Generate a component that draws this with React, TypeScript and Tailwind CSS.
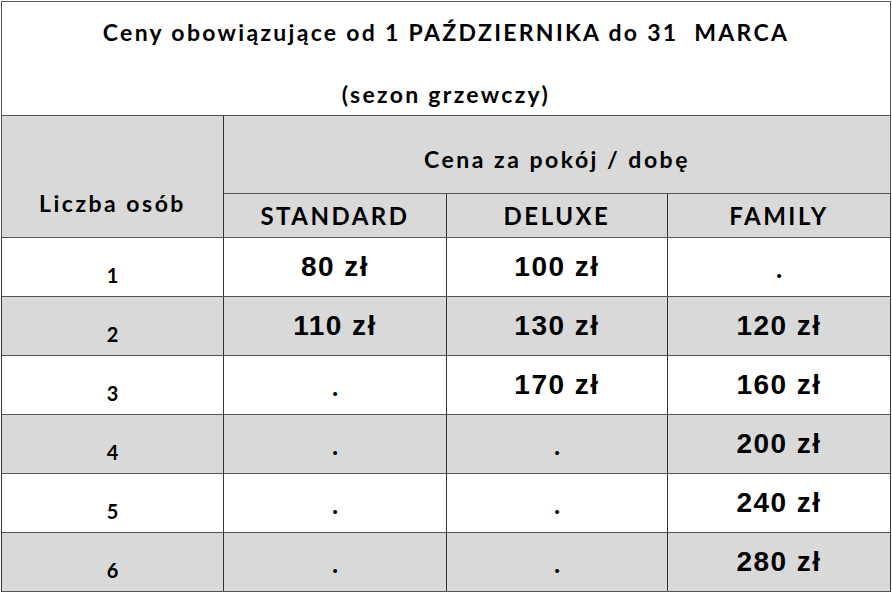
import React from "react";

type Row = {
    persons: string;
    standard: string;
    deluxe: string;
    family: string;
};

const rows: Row[] = [
    { persons: "1", standard: "80 zł", deluxe: "100 zł", family: "." },
    { persons: "2", standard: "110 zł", deluxe: "130 zł", family: "120 zł" },
    { persons: "3", standard: ".", deluxe: "170 zł", family: "160 zł" },
    { persons: "4", standard: ".", deluxe: ".", family: "200 zł" },
    { persons: "5", standard: ".", deluxe: ".", family: "240 zł" },
    { persons: "6", standard: ".", deluxe: ".", family: "280 zł" },
];

const headFont = "font-['Lato','Noto_Sans',sans-serif] font-bold text-black";

function PriceCell({ value }: { value: string }) {
    if (value === ".") {
        return (
            <td className="border-x border-x-[#333] border-y border-y-[#555] text-center align-top pt-[17px]">
                <span className={`${headFont} text-[26px] leading-none`}>.</span>
            </td>
        );
    }
    return (
        <td className="border-x border-x-[#333] border-y border-y-[#555] text-center align-middle">
            <span className="font-['Liberation_Sans',Arial,sans-serif] font-bold text-[28px] tracking-[1.5px] leading-none text-black">
                {value}
            </span>
        </td>
    );
}

export default function App() {
    return (
        <div className="w-[892px] h-[595px] bg-white pt-px pl-px">
            <table className="table-fixed border-collapse w-[889px] border border-[#555]">
                <colgroup>
                    <col className="w-[222px]" />
                    <col className="w-[223px]" />
                    <col className="w-[221px]" />
                    <col className="w-[223px]" />
                </colgroup>
                <tbody>
                    <tr className="h-[114px] bg-white">
                        <td colSpan={4} className="border border-[#555] p-0">
                            <div className={`${headFont} flex flex-col items-center text-[23px] tracking-[2.3px] leading-none`}>
                                <span className="pt-[10px]">Ceny obowiązujące od 1 PAŹDZIERNIKA do 31&nbsp; MARCA</span>
                                <span className="mt-[39px]">(sezon grzewczy)</span>
                            </div>
                        </td>
                    </tr>
                    <tr className="h-[78px] bg-[#d9d9d9]">
                        <td rowSpan={2} className={`${headFont} border border-[#555] border-r-[#333] text-center text-[23px] tracking-[2.5px] pt-[54px]`}>
                            Liczba osób
                        </td>
                        <td colSpan={3} className={`${headFont} border border-[#555] text-center text-[23px] tracking-[2.5px] pt-[10px]`}>
                            Cena za pokój / dobę
                        </td>
                    </tr>
                    <tr className="h-[44px] bg-[#d9d9d9]">
                        {["STANDARD", "DELUXE", "FAMILY"].map((label) => (
                            <td key={label} className={`${headFont} border-x border-x-[#333] border-y border-y-[#555] text-center text-[24px] tracking-[2.5px]`}>
                                {label}
                            </td>
                        ))}
                    </tr>
                    {rows.map((row, index) => (
                        <tr key={row.persons} className={`h-[59px] ${index % 2 === 1 ? "bg-[#d9d9d9]" : "bg-white"}`}>
                            <td className="border-x border-x-[#333] border-y border-y-[#555] text-center align-top pt-[27px]">
                                <span className={`${headFont} text-[20px] leading-none`}>{row.persons}</span>
                            </td>
                            <PriceCell value={row.standard} />
                            <PriceCell value={row.deluxe} />
                            <PriceCell value={row.family} />
                        </tr>
                    ))}
                </tbody>
            </table>
        </div>
    );
}
